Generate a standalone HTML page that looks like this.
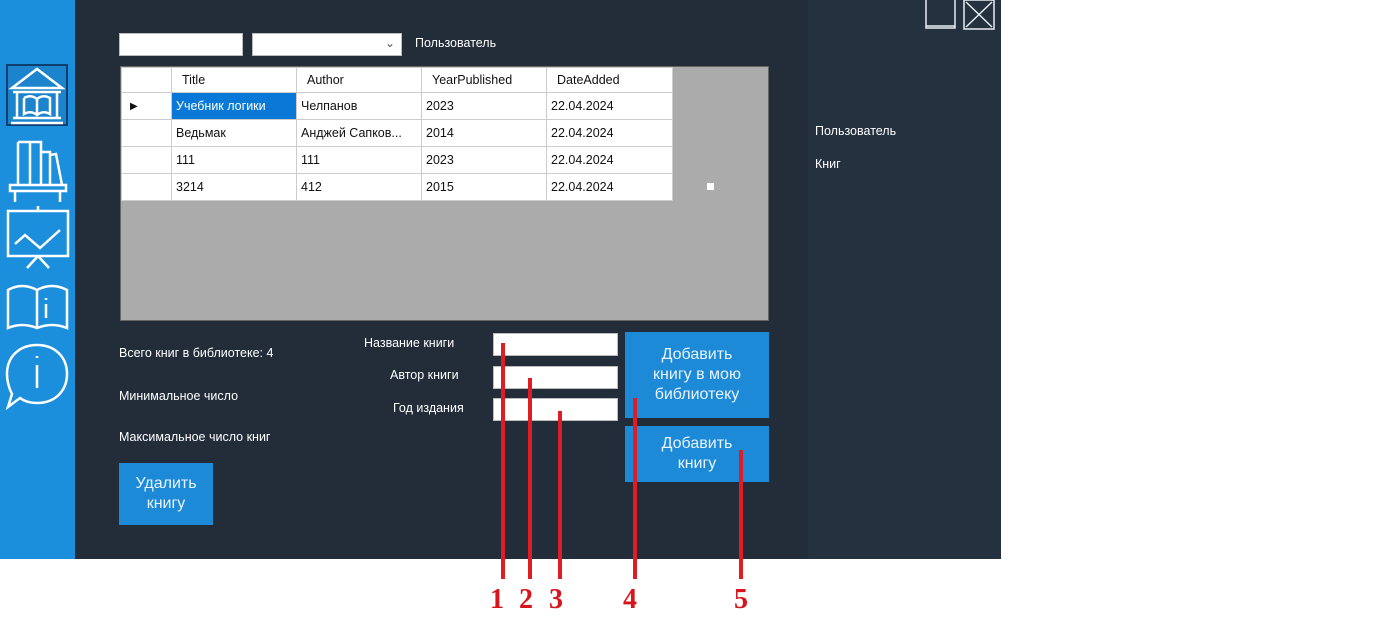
<!DOCTYPE html><html><head><meta charset="utf-8"><style>
*{margin:0;padding:0;box-sizing:border-box}
body{width:1381px;height:639px;background:#fff;position:relative;overflow:hidden;font-family:"Liberation Sans",sans-serif}
.a{position:absolute}
.t{color:#fff;font-size:12.5px}
.in{background:#fff;border:1px solid #bbb}
.btn{background:#1d8ad8;color:#eaf3fb;font-size:16px;text-align:center;line-height:20px;display:flex;align-items:center;justify-content:center}
table{border-collapse:collapse;font-size:12.5px;color:#111;table-layout:fixed}
td{border:1px solid #ccc;height:27px;padding-left:4px;background:#fff;white-space:nowrap;overflow:hidden}
tr.h td{height:25px}
.rl{background:#e01c24;width:4px}
.n{color:#d8141c;font:bold 28px "Liberation Serif",serif}
</style></head><body>
<div class="a" style="left:0;top:0;width:1001px;height:559px;background:#222d39"></div>
<div class="a" style="left:808px;top:0;width:193px;height:559px;background:#24313f"></div>
<div class="a" style="left:0;top:0;width:75px;height:559px;background:#1c8fdc"></div>
<div class="a" style="left:6px;top:64px;width:62px;height:62px;border:2px solid #0d3f70;background:#1b84cc"></div>
<svg class="a" style="left:0;top:60px" width="75" height="360" fill="none" stroke="#fff" stroke-width="2.5">
<path d="M12 28 L37 9 L62 28 Z M13 32 H61 M13 58 H61 M11 63 H63 M17 32 V58 M57 32 V58 M24 38 V54 Q31 50 37 55 Q43 50 50 54 V38 Q43 34 37 39 Q31 34 24 38 M37 39 V55"/>
<path d="M18 82 V125 M18 82 H30 V125 M30 82 H41 V125 M41 92 H50 V125 M50 95 L56 94 L62 125 M10 125 H66 V131 H10 Z M15 131 V142 M60 131 V142"/>
<path d="M8 151 H68 V196 H8 Z M38 146 V151 M38 196 L27 208 M38 196 L49 208 M15 184 L25 175 L40 188 L60 170"/>
<path d="M8 230 Q22 222 37 230 Q52 222 67 230 V268 Q52 262 37 268 Q22 262 8 268 Z M37 230 V268 M46 244 V258 M46 238 V240" />
<path d="M37 285 C55 285 67 297 67 314 C67 331 55 343 37 343 C30 343 24 341 20 338 L8 347 L12 334 C9 328 7 322 7 314 C7 297 19 285 37 285 Z M37 305 V328 M37 296 V298"/>
</svg>
<div class="a in" style="left:119px;top:33px;width:124px;height:23px"></div>
<div class="a in" style="left:252px;top:33px;width:150px;height:23px"><span class="a" style="right:6px;top:2px;font-size:12px;color:#555">&#8964;</span></div>
<div class="a t" style="left:415px;top:36px">Пользователь</div>
<div class="a" style="left:120px;top:66px;width:649px;height:255px;background:#ababab;border:1px solid #666"></div>
<table class="a" style="left:121px;top:67px;width:551px">
<colgroup><col style="width:50px"><col style="width:125px"><col style="width:125px"><col style="width:125px"><col style="width:126px"></colgroup>
<tr class="h"><td></td><td style="padding-left:10px">Title</td><td style="padding-left:10px">Author</td><td style="padding-left:10px">YearPublished</td><td style="padding-left:10px">DateAdded</td></tr>
<tr><td style="font-size:10px;padding-left:8px">&#9654;</td><td style="background:#0a78d7;color:#fff">Учебник логики</td><td>Челпанов</td><td>2023</td><td>22.04.2024</td></tr>
<tr><td></td><td>Ведьмак</td><td>Анджей Сапков...</td><td>2014</td><td>22.04.2024</td></tr>
<tr><td></td><td>111</td><td>111</td><td>2023</td><td>22.04.2024</td></tr>
<tr><td></td><td>3214</td><td>412</td><td>2015</td><td>22.04.2024</td></tr>
</table>
<div class="a" style="left:707px;top:183px;width:7px;height:7px;background:#fff"></div>
<div class="a t" style="left:119px;top:346px">Всего книг в библиотеке: 4</div>
<div class="a t" style="left:119px;top:389px">Минимальное число</div>
<div class="a t" style="left:119px;top:430px">Максимальное число книг</div>
<div class="a btn" style="left:119px;top:463px;width:94px;height:62px">Удалить<br>книгу</div>
<div class="a t" style="left:364px;top:336px">Название книги</div>
<div class="a t" style="left:390px;top:368px">Автор книги</div>
<div class="a t" style="left:393px;top:401px">Год издания</div>
<div class="a in" style="left:493px;top:333px;width:125px;height:23px"></div>
<div class="a in" style="left:493px;top:366px;width:125px;height:23px"></div>
<div class="a in" style="left:493px;top:398px;width:125px;height:23px"></div>
<div class="a btn" style="left:625px;top:332px;width:144px;height:86px">Добавить<br>книгу в мою<br>библиотеку</div>
<div class="a btn" style="left:625px;top:426px;width:144px;height:56px">Добавить<br>книгу</div>
<div class="a t" style="left:815px;top:124px">Пользователь</div>
<div class="a t" style="left:815px;top:157px">Книг</div>
<svg class="a" style="left:924px;top:0" width="72" height="32" fill="none" stroke="#e8eef3" stroke-width="1.5"><path d="M2 0 V28 H31 V0 M2 26 H31"/><path d="M40 0 V29 H70 V0 M40 0 H70 M42 2 L68 27 M68 2 L42 27"/></svg>
<div class="a rl" style="left:501px;top:343px;height:236px"></div>
<div class="a rl" style="left:528px;top:378px;height:201px"></div>
<div class="a rl" style="left:558px;top:411px;height:168px"></div>
<div class="a rl" style="left:633px;top:398px;height:181px"></div>
<div class="a rl" style="left:739px;top:450px;height:129px"></div>
<div class="a n" style="left:490px;top:584px">1</div>
<div class="a n" style="left:519px;top:584px">2</div>
<div class="a n" style="left:549px;top:584px">3</div>
<div class="a n" style="left:623px;top:584px">4</div>
<div class="a n" style="left:734px;top:584px">5</div>
</body></html>
